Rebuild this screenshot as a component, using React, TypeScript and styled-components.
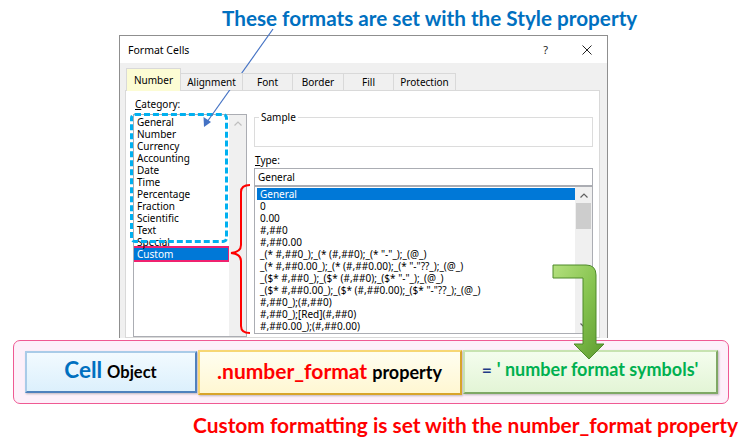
import * as React from 'react';
import styled, { createGlobalStyle, css } from 'styled-components';

const GlobalStyle = createGlobalStyle`
  html, body {
    margin: 0;
    padding: 0;
    background: #ffffff;
  }
`;

const Page = styled.div`
  position: relative;
  width: 750px;
  height: 441px;
  overflow: hidden;
  background: #ffffff;
  font-family: 'Noto Sans', 'Liberation Sans', sans-serif;
`;

const TopCaption = styled.div`
  height: 35px;
  box-sizing: border-box;
  padding: 7px 0 0 222px;
  font-family: Lato, 'Liberation Sans', sans-serif;
  font-weight: 700;
  font-size: 20.7px;
  line-height: 22px;
  color: #0070c0;
  white-space: nowrap;
`;

const Dialog = styled.div`
  margin-left: 119px;
  width: 489px;
  height: 303px;
  box-sizing: border-box;
  border: 1px solid #8f8f8f;
  border-bottom: none;
  display: flex;
  flex-direction: column;
  overflow: hidden;
`;

const TitleBar = styled.div`
  height: 27px;
  flex: none;
  display: flex;
  align-items: center;
  padding: 0 15px 0 8px;
  background: #ffffff;
  font-size: 10.5px;
  color: #000;
`;

const TitleText = styled.span`
  flex: 1;
`;

const Help = styled.span`
  font-size: 11px;
  margin-right: 34px;
  color: #222;
`;

const Body = styled.div`
  flex: 1;
  display: flex;
  flex-direction: column;
  background: #f0f0f0;
  padding: 7px 7px 0 5px;
  min-height: 0;
`;

const TabRow = styled.div`
  display: flex;
  align-items: flex-end;
  height: 20px;
  margin-left: 2px;
  position: relative;
  z-index: 1;
`;

const Tab = styled.div<{ $active?: boolean; $w: number }>`
  width: ${(p) => p.$w}px;
  box-sizing: border-box;
  display: flex;
  align-items: center;
  justify-content: center;
  font-size: 10px;
  color: #000;
  border: 1px solid #d9d9d9;
  border-bottom: none;
  margin-left: -1px;
  ${(p) =>
    p.$active
      ? css`
          height: 23px;
          margin-bottom: -1px;
          background: #fcfcd4;
        `
      : css`
          height: 17px;
          background: #f0f0f0;
        `}
`;

const Panel = styled.div`
  flex: 1;
  background: #ffffff;
  border: 1px solid #d9d9d9;
  display: grid;
  grid-template-columns: 114px 339px;
  column-gap: 7px;
  padding-left: 7px;
  min-height: 0;
`;

const Column = styled.div`
  display: flex;
  flex-direction: column;
  min-height: 0;
`;

const Label = styled.div`
  font-size: 10px;
  line-height: 12px;
  color: #000;
  u {
    text-decoration-thickness: 1px;
  }
`;

const CategoryLabel = styled(Label)`
  padding: 7px 0 4px 2px;
`;

const ListBox = styled.div<{ $h?: number }>`
  position: relative;
  display: flex;
  border: 1px solid #abadb3;
  box-sizing: border-box;
  background: #ffffff;
  ${(p) => (p.$h ? `height: ${p.$h}px;` : 'flex: 1;')}
`;

const Items = styled.div<{ $pad: number }>`
  flex: 1;
  min-width: 0;
  padding: 1px 0 0 ${(p) => p.$pad}px;
  overflow: hidden;
`;

const Item = styled.div<{ $selected?: boolean; $outlined?: boolean }>`
  font-size: 10px;
  line-height: 12px;
  height: 12px;
  padding-left: 3px;
  white-space: nowrap;
  color: #000;
  ${(p) =>
    p.$selected &&
    css`
      background: #0078d7;
      color: #ffffff;
    `}
  ${(p) =>
    p.$outlined &&
    css`
      box-shadow: 0 0 0 2px #f0216f;
      margin-right: 1px;
    `}
`;

const ScrollTrack = styled.div`
  width: 17px;
  flex: none;
  background: #f0f0f0;
  display: flex;
  flex-direction: column;
  align-items: center;
`;

const ArrowButton = styled.div<{ $dim?: boolean }>`
  height: 16px;
  display: flex;
  align-items: center;
  justify-content: center;
  color: ${(p) => (p.$dim ? '#bfbfbf' : '#606060')};
`;

const Thumb = styled.div`
  width: 15px;
  height: 26px;
  background: #cdcdcd;
`;

const Spacer = styled.div`
  flex: 1;
`;

const DashedFrame = styled.div`
  position: absolute;
  left: -4px;
  top: -2px;
  width: 98px;
  height: 130px;
  box-sizing: border-box;
  border: 3px dashed #00b0f0;
  border-radius: 5px;
  pointer-events: none;
`;

const SampleBox = styled.div`
  margin-top: 26px;
  height: 30px;
  box-sizing: border-box;
  border: 1px solid #dcdcdc;
`;

const Legend = styled.div`
  width: fit-content;
  margin: -7px 0 0 4px;
  padding: 0 2px;
  background: #ffffff;
  font-size: 10px;
  line-height: 12px;
  color: #000;
`;

const TypeLabel = styled(Label)`
  margin-top: 7px;
  padding-left: 1px;
`;

const TypeInput = styled.div`
  margin-top: 2px;
  height: 18px;
  box-sizing: border-box;
  border: 1px solid #abadb3;
  padding-left: 3px;
  font-size: 10px;
  line-height: 16px;
  color: #000;
`;

const Callout = styled.div`
  margin: 2px 0 0 13px;
  width: 716px;
  height: 64px;
  box-sizing: border-box;
  border: 1.5px solid #ef5a93;
  border-radius: 7px;
  background: #fdf0fa;
  display: flex;
  align-items: center;
  gap: 1px;
  padding-left: 10.5px;
  font-family: Lato, 'Liberation Sans', sans-serif;
  font-weight: 700;
`;

const tones = {
  blue: css`
    background: linear-gradient(#f2faff, #dcf0fc);
    border-color: #a9cbe8 #4f81bd #4f81bd #a9cbe8;
  `,
  yellow: css`
    background: linear-gradient(#fffef0, #fff7d2);
    border-color: #f7d774 #d8a42a #d8a42a #f7d774;
  `,
  green: css`
    background: linear-gradient(#f4fdee, #e3f5d6);
    border-color: #c7e3b1 #7fa865 #7fa865 #c7e3b1;
  `,
};

const FormulaBox = styled.div<{
  $tone: keyof typeof tones;
  $w: number;
  $h: number;
  $pt: number;
}>`
  width: ${(p) => p.$w}px;
  height: ${(p) => p.$h}px;
  box-sizing: border-box;
  border: 2px solid;
  box-shadow: 1px 1px 2px rgba(0, 0, 0, 0.25);
  display: flex;
  align-items: baseline;
  justify-content: center;
  padding-top: ${(p) => p.$pt}px;
  gap: 5px;
  ${(p) => tones[p.$tone]}
`;

const Word = styled.span<{ $color: string; $size: number }>`
  color: ${(p) => p.$color};
  font-size: ${(p) => p.$size}px;
  line-height: 1.2;
  white-space: pre;
`;

const BottomCaption = styled.div`
  padding: 10px 0 0 193px;
  font-family: Lato, 'Liberation Sans', sans-serif;
  font-weight: 700;
  font-size: 20.9px;
  line-height: 22px;
  color: #ff0000;
  white-space: nowrap;
`;

const Overlay = styled.svg`
  position: absolute;
  left: 0;
  top: 0;
  pointer-events: none;
`;

const categories = [
  'General',
  'Number',
  'Currency',
  'Accounting',
  'Date',
  'Time',
  'Percentage',
  'Fraction',
  'Scientific',
  'Text',
  'Special',
  'Custom',
];

const types = [
  'General',
  '0',
  '0.00',
  '#,##0',
  '#,##0.00',
  '_(* #,##0_);_(* (#,##0);_(* "-"_);_(@_)',
  '_(* #,##0.00_);_(* (#,##0.00);_(* "-"??_);_(@_)',
  '_($* #,##0_);_($* (#,##0);_($* "-"_);_(@_)',
  '_($* #,##0.00_);_($* (#,##0.00);_($* "-"??_);_(@_)',
  '#,##0_);(#,##0)',
  '#,##0_);[Red](#,##0)',
  '#,##0.00_);(#,##0.00)',
];

const tabs = [
  { name: 'Number', w: 55 },
  { name: 'Alignment', w: 63 },
  { name: 'Font', w: 51 },
  { name: 'Border', w: 52 },
  { name: 'Fill', w: 51 },
  { name: 'Protection', w: 63 },
];

function Chevron({ down }: { down?: boolean }) {
  return (
    <svg width="8" height="5" viewBox="0 0 8 5">
      <path
        d={down ? 'M0.5 0.5 L4 4 L7.5 0.5' : 'M0.5 4.5 L4 1 L7.5 4.5'}
        fill="none"
        stroke="currentColor"
        strokeWidth="1.2"
      />
    </svg>
  );
}

function Close() {
  return (
    <svg width="10" height="10" viewBox="0 0 10 10">
      <path d="M0.5 0.5 L9.5 9.5 M9.5 0.5 L0.5 9.5" stroke="#222" strokeWidth="1" />
    </svg>
  );
}

function Annotations() {
  return (
    <Overlay width="750" height="441" viewBox="0 0 750 441">
      <defs>
        <linearGradient id="greenShaft" x1="0" y1="0" x2="1" y2="1">
          <stop offset="0" stopColor="#b4e07e" />
          <stop offset="0.5" stopColor="#86c34f" />
          <stop offset="1" stopColor="#5d9c2f" />
        </linearGradient>
      </defs>
      {/* blue pointer from the top caption */}
      <line x1="273" y1="29" x2="207" y2="122" stroke="#4472c4" strokeWidth="1.2" />
      <polygon points="204,127 203.5,117 211,122" fill="#4472c4" />
      {/* red brace */}
      <path
        d="M250 185 Q241 185 241 192 L241 245 Q241 252 231 253 Q241 254 241 261 L241 326 Q241 333 250 333"
        fill="none"
        stroke="#ff0000"
        strokeWidth="2"
      />
      {/* green bent arrow */}
      <path
        d="M553 265 L586 265 Q596 265 596 275 L596 344 L604 344 L589 359 L574 344 L583 344 L583 278 L553 278 Z"
        fill="url(#greenShaft)"
        stroke="#4e8a2a"
        strokeWidth="1"
      />
    </Overlay>
  );
}

export default function App() {
  return (
    <>
      <GlobalStyle />
      <Page>
        <TopCaption>These formats are set with the Style property</TopCaption>
        <Dialog>
          <TitleBar>
            <TitleText>Format Cells</TitleText>
            <Help>?</Help>
            <Close />
          </TitleBar>
          <Body>
            <TabRow>
              {tabs.map((t, i) => (
                <Tab key={t.name} $w={t.w} $active={i === 0}>
                  {t.name}
                </Tab>
              ))}
            </TabRow>
            <Panel>
              <Column>
                <CategoryLabel>
                  <u>C</u>ategory:
                </CategoryLabel>
                <ListBox>
                  <Items $pad={0}>
                    {categories.map((c) => (
                      <Item
                        key={c}
                        $selected={c === 'Custom'}
                        $outlined={c === 'Custom'}
                      >
                        {c}
                      </Item>
                    ))}
                  </Items>
                  <ScrollTrack>
                    <ArrowButton $dim>
                      <Chevron />
                    </ArrowButton>
                  </ScrollTrack>
                  <DashedFrame />
                </ListBox>
              </Column>
              <Column>
                <SampleBox>
                  <Legend>Sample</Legend>
                </SampleBox>
                <TypeLabel>
                  <u>T</u>ype:
                </TypeLabel>
                <TypeInput>General</TypeInput>
                <ListBox $h={148}>
                  <Items $pad={2}>
                    {types.map((t, i) => (
                      <Item key={t} $selected={i === 0}>
                        {t}
                      </Item>
                    ))}
                  </Items>
                  <ScrollTrack>
                    <ArrowButton>
                      <Chevron />
                    </ArrowButton>
                    <Thumb />
                    <Spacer />
                    <ArrowButton>
                      <Chevron down />
                    </ArrowButton>
                  </ScrollTrack>
                </ListBox>
              </Column>
            </Panel>
          </Body>
        </Dialog>
        <Callout>
          <FormulaBox $tone="blue" $w={172} $h={42} $pt={3}>
            <Word $color="#0070c0" $size={22.5}>
              Cell
            </Word>
            <Word $color="#000000" $size={16.5}>
              Object
            </Word>
          </FormulaBox>
          <FormulaBox $tone="yellow" $w={264} $h={45} $pt={6}>
            <Word $color="#ff0000" $size={21}>
              .number_format
            </Word>
            <Word $color="#000000" $size={18}>
              property
            </Word>
          </FormulaBox>
          <FormulaBox $tone="green" $w={255} $h={44} $pt={7}>
            <Word $color="#1f3c88" $size={17.5}>
              =
            </Word>
            <Word $color="#00b050" $size={18}>
              ' number format symbols'
            </Word>
          </FormulaBox>
        </Callout>
        <BottomCaption>Custom formatting is set with the number_format property</BottomCaption>
        <Annotations />
      </Page>
    </>
  );
}
